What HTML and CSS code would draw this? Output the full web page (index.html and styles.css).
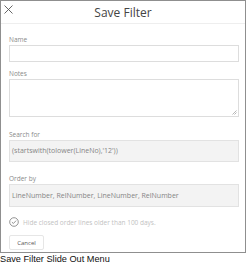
FILE: index.html
```html
<!DOCTYPE html>
<html lang="en">
<head>
    <meta charset="UTF-8">
    <meta name="viewport" content="width=device-width, initial-scale=1.0">
    <title>Save Filter</title>
    <link rel="stylesheet" href="styles.css">
</head>
<body>
    <div class="panel">
        <div class="panel-header">
            <svg class="close-icon" width="9" height="9" viewBox="0 0 9 9">
                <path d="M0.5 0.5 L8.5 8.5 M8.5 0.5 L0.5 8.5" stroke="#555" stroke-width="0.9" fill="none"/>
            </svg>
            <h1 class="title">Save Filter</h1>
        </div>

        <div class="form">
            <div class="field field-name">
                <label for="filterName">Name</label>
                <input type="text" id="filterName" class="text-input">
            </div>

            <div class="field field-notes">
                <label for="filterNotes">Notes</label>
                <div class="area-wrap">
                    <textarea id="filterNotes" class="text-area"></textarea>
                    <svg class="grip" width="5" height="5" viewBox="0 0 5 5">
                        <path d="M0.5 4.5 L4.5 0.5 M2.5 4.5 L4.5 2.5" stroke="#999" stroke-width="0.7" fill="none"/>
                    </svg>
                </div>
            </div>

            <div class="field field-search">
                <label>Search for</label>
                <div class="readonly-box">(startswith(tolower(LineNo),'12'))</div>
            </div>

            <div class="field field-order">
                <label>Order by</label>
                <div class="readonly-box">LineNumber, RelNumber, LineNumber, RelNumber</div>
            </div>

            <div class="check-row">
                <svg class="check-icon" width="10" height="10" viewBox="0 0 10 10">
                    <circle cx="5" cy="5" r="4.3" stroke="#7a7a7a" stroke-width="0.8" fill="none"/>
                    <path d="M2.9 5.1 L4.4 6.5 L7.1 3.6" stroke="#7a7a7a" stroke-width="0.8" fill="none"/>
                </svg>
                <span>Hide closed order lines older than 100 days.</span>
            </div>

            <button class="cancel-btn">Cancel</button>
        </div>
    </div>
    <div class="caption">Save Filter Slide Out Menu</div>
</body>
</html>
```

FILE: styles.css
```css
* {
    margin: 0;
    padding: 0;
    box-sizing: border-box;
}

body {
    font-family: 'Open Sans', sans-serif;
    background: white;
    width: 247px;
}

.panel {
    width: 246px;
    height: 253px;
    border: 1px solid #8f8f8f;
    background: white;
}

.panel-header {
    position: relative;
    height: 23px;
    border-bottom: 1px solid #eeeeee;
    display: flex;
    justify-content: center;
    align-items: center;
}

.close-icon {
    position: absolute;
    left: 3px;
    top: 4px;
}

.title {
    font-size: 12px;
    font-weight: 400;
    color: #444;
}

.form {
    padding: 11px 7px 0 8px;
}

.field label {
    display: block;
    font-size: 6.5px;
    line-height: 10px;
    color: #8a8a8a;
}

.field-notes {
    margin-top: 7px;
}

.field-search {
    margin-top: 13px;
}

.field-order {
    margin-top: 12px;
}

.text-input {
    display: block;
    width: 230px;
    height: 17px;
    border: 1px solid #dddddd;
    outline: none;
}

.area-wrap {
    position: relative;
    width: 230px;
}

.text-area {
    display: block;
    width: 230px;
    height: 38px;
    border: 1px solid #dddddd;
    outline: none;
    resize: none;
}

.grip {
    position: absolute;
    right: 2px;
    bottom: 2px;
}

.readonly-box {
    width: 230px;
    height: 23px;
    background: #f3f3f3;
    border: 1px solid #e2e2e2;
    padding-left: 2px;
    font-size: 7px;
    line-height: 21px;
    color: #858585;
}

.field-search .readonly-box {
    height: 22px;
    line-height: 20px;
}

.check-row {
    display: flex;
    align-items: center;
    gap: 4px;
    margin-top: 10px;
    height: 10px;
    font-size: 6.5px;
    color: #c2c2c2;
}

.cancel-btn {
    display: block;
    margin-top: 8px;
    width: 35px;
    height: 15px;
    border: 1px solid #e6e6e6;
    border-radius: 2px;
    background: white;
    font-family: 'Open Sans', sans-serif;
    font-size: 6px;
    color: #555;
}

.caption {
    font-family: 'Liberation Sans', Arial, sans-serif;
    font-size: 9.2px;
    line-height: 12px;
    color: #111;
}
```
